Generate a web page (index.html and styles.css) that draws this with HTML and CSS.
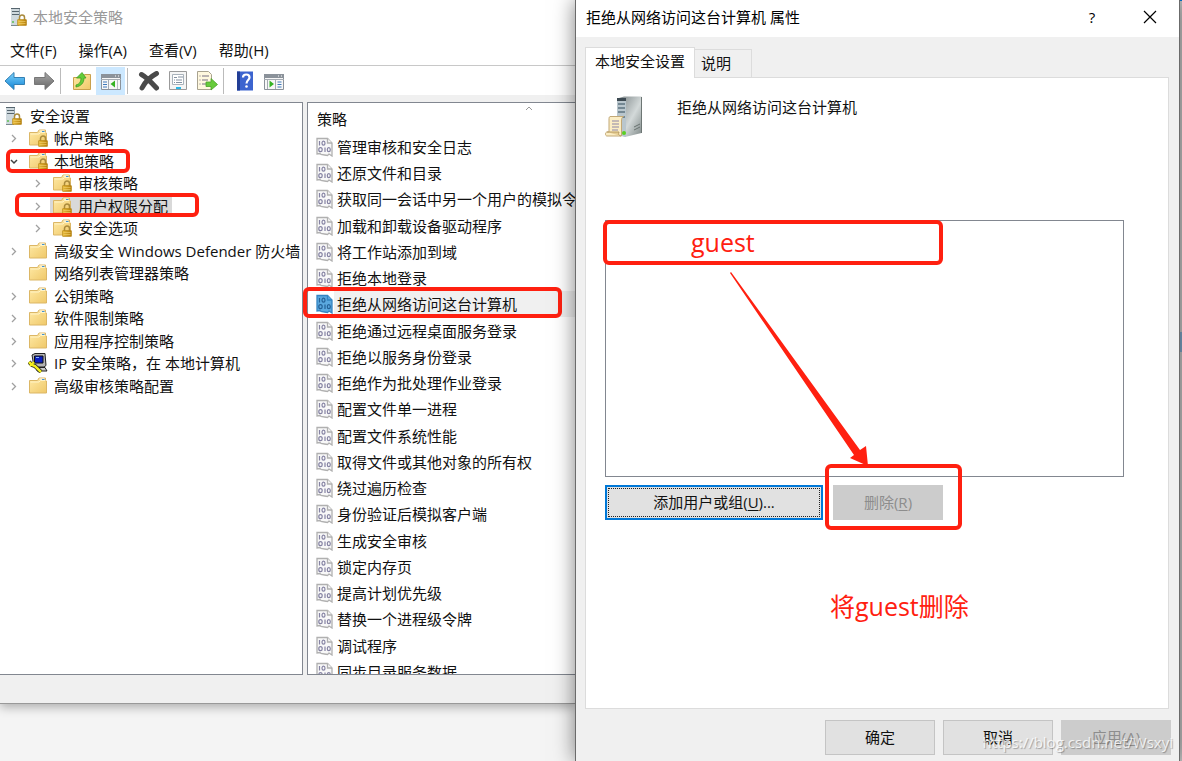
FILE: index.html
```html
<!DOCTYPE html>
<html lang="zh-CN">
<head>
    <meta charset="utf-8">
    <title>本地安全策略</title>
    <link rel="stylesheet" href="styles.css">
</head>
<body>
    <!-- Shared icons -->
    <svg class="defs" width="0" height="0" aria-hidden="true">
        <defs>
            <linearGradient id="gold" x1="0" y1="0" x2="1" y2="1">
                <stop offset="0" stop-color="#ffeaa6"/><stop offset="1" stop-color="#efc869"/>
            </linearGradient>
            <linearGradient id="lockg" x1="0" y1="0" x2="1" y2="0">
                <stop offset="0" stop-color="#e9bd3c"/><stop offset="1" stop-color="#b57f0c"/>
            </linearGradient>
            <linearGradient id="blue" x1="0" y1="0" x2="0" y2="1">
                <stop offset="0" stop-color="#7fd3fa"/><stop offset="1" stop-color="#0f83d6"/>
            </linearGradient>
            <linearGradient id="grey" x1="0" y1="0" x2="0" y2="1">
                <stop offset="0" stop-color="#a9a9a9"/><stop offset="1" stop-color="#656565"/>
            </linearGradient>
            <linearGradient id="steel" x1="0" y1="0" x2="1" y2="1">
                <stop offset="0" stop-color="#7d8688"/><stop offset=".55" stop-color="#d3d9d9"/><stop offset="1" stop-color="#7f8988"/>
            </linearGradient>
        </defs>
        <symbol id="lock" viewBox="0 0 10 12">
            <path d="M2.500 6V3.500a2.500 2.500 0 0 1 5 0V6" fill="none" stroke="#a98a3c" stroke-width="1.500"/>
            <rect x=".5" y="5.500" width="9" height="6" rx=".6" fill="url(#lockg)" stroke="#b5861a" stroke-width=".6"/>
            <path d="M1.500 7.500h7M1.500 9.500h7" stroke="#f3d374" stroke-width=".6"/>
        </symbol>
        <symbol id="folder" viewBox="0 0 20 20">
            <path d="M1.500 4.500h8l1.500-2.500h6.500v3h1v12h-17z" fill="url(#gold)" stroke="#dcb766"/>
            <path d="M11.500 3h5" stroke="#fff"/>
            <path d="M14 3.500h2.500" stroke="#3f93d6"/>
            <path d="M2.500 6h8.500l1.500-1.500h5" stroke="#fff3c7" fill="none"/>
        </symbol>
        <symbol id="folder-lock" viewBox="0 0 20 20">
            <use href="#folder" width="20" height="20"/>
            <use href="#lock" x="10" y="7" width="10" height="12"/>
        </symbol>
        <symbol id="server-lock" viewBox="0 0 20 20">
            <path d="M2 1h9v17H2z" fill="#94a3ab"/>
            <path d="M2 1h8v17H2z" fill="#cfd9de"/>
            <path d="M2 1.500h9M3 4.500h7M3 7.500h7" stroke="#56656e" stroke-width="1.200"/>
            <path d="M2 18.500h8" stroke="#7b898f"/>
            <circle cx="4" cy="15" r="1" fill="#5fbf52"/>
            <use href="#lock" x="8" y="7" width="10" height="12"/>
        </symbol>
        <symbol id="pc-key" viewBox="0 0 20 20">
            <path d="M4 2l3-1.500h10l1 12-2 1.500H6z" fill="#b4b4b4" stroke="#222"/>
            <path d="M6.500 3h8.500v7H6.500z" fill="#0a1fc0" stroke="#111"/>
            <path d="M8 4.500h3" stroke="#83b2ff"/>
            <path d="M9 14.500h8l2 3.500H9z" fill="#c9c9c9" stroke="#222"/>
            <path d="M1 9l3 3 3 1 6 6" fill="none" stroke="#222" stroke-width="4"/>
            <path d="M1 9l3 3 3 1 6 6" fill="none" stroke="#f3ef1d" stroke-width="2.500"/>
            <path d="M2 13l4-4" stroke="#f3ef1d" stroke-width="2"/>
        </symbol>
        <symbol id="chev" viewBox="0 0 20 20">
            <path d="M8 7l3.500 3.500L8 14" fill="none" stroke="#a0a0a0" stroke-width="1.300"/>
        </symbol>
        <symbol id="chev-open" viewBox="0 0 20 20">
            <path d="M7 9l3 3 3-3" fill="none" stroke="#404040" stroke-width="1.500"/>
        </symbol>
        <symbol id="policy" viewBox="0 0 17 20">
            <path class="sheet" d="M1 1.500h10.500l4.500 4.500V19l-3-2-1.500 1.500L8.500 18 5 17.500 4 16.500 1 17z" stroke-width="1.300"/>
            <path class="sheet" d="M11.500 1.500V6H16" stroke-width="1.300"/>
            <g class="bits" fill="none" stroke-width="1.200">
                <path d="M3.500 4v4.500M9 10.500V15"/>
                <ellipse cx="7.500" cy="6.200" rx="1.500" ry="2"/>
                <ellipse cx="4.500" cy="12.700" rx="1.700" ry="2"/>
                <ellipse cx="12.800" cy="12.700" rx="1.500" ry="2"/>
            </g>
        </symbol>
    </svg>

    <div class="desktop">
        <!-- Policy console -->
        <section class="console">
            <header class="console-title">
                <svg class="ico"><use href="#server-lock"/></svg>
                <span>本地安全策略</span>
            </header>
            <nav class="menu">
                <button>文件(F)</button>
                <button>操作(A)</button>
                <button>查看(V)</button>
                <button>帮助(H)</button>
            </nav>
            <div class="toolbar">
                <button aria-label="后退"><svg viewBox="0 0 22 20"><path d="M1 10l9-8.500v5h10.500v7H10v5z" fill="url(#blue)" stroke="#3380b4"/></svg></button>
                <button aria-label="前进"><svg viewBox="0 0 22 20"><path d="M21 10l-9-8.500v5H1.500v7H12v5z" fill="url(#grey)" stroke="#777"/></svg></button>
                <i class="sep"></i>
                <button aria-label="上一级"><svg viewBox="0 0 22 20"><path d="M2.500 6.500h9l2-3h6v15h-17z" fill="url(#gold)" stroke="#c9a04c"/><path d="M5 14c4-1 5-4 5-7H5.500l5.500-5.500L15 7h-2c0 5-3 8-8 9z" fill="#63cc38" stroke="#3c9c22" stroke-width=".8"/></svg></button>
                <button class="on" aria-label="显示控制台树"><svg viewBox="0 0 22 20"><path d="M1.500 3.500h19v15h-19z" fill="#f7f7f7" stroke="#8b929a"/><path d="M1 3h20v4H1z" fill="#8b929a"/><path d="M15 5h1M18 5h1" stroke="#fff"/><path d="M1 8.500h20M8.500 9v9" stroke="#a5abb2"/><path d="M3 11h4M3 13.500h4M3 16h4" stroke="#3e79bb"/><path d="M15 9.500v7L10.500 13z" fill="#35b322"/><path d="M17.500 9v9" stroke="#b9bec4"/></svg></button>
                <i class="sep"></i>
                <button aria-label="删除"><svg viewBox="0 0 22 20"><path d="M3.500 3.500C8 6 13 11 18.500 17M18.500 2.500C12 6 7 11 4 17" fill="none" stroke="#4a4a4a" stroke-width="5" stroke-linecap="round"/></svg></button>
                <button aria-label="属性"><svg viewBox="0 0 22 20"><path d="M2.500 .5h17v18h-17z" fill="#f5f5f5" stroke="#9a9a9a"/><path d="M5.500 3.500h11v10h-11z" fill="#fff" stroke="#a9b2bb"/><path d="M7 6.500h3M7 9h1M9 9h6M7 11.500h1M9 11.500h6M11 6h5" stroke="#8390a0"/><path d="M9 17h5" stroke="#29b7e6" stroke-width="2"/></svg></button>
                <button aria-label="导出列表"><svg viewBox="0 0 22 20"><path d="M1.500 .5h11l3 3v15h-14z" fill="#fff8df" stroke="#a9a390"/><path d="M3.500 5h1M6 5h7M3.500 9h1M6 9h6M3.500 13h1M6 13h5" stroke="#766e83"/><path d="M10 11h5V7.500l6.500 6L15 19v-3.500h-5z" fill="#67cb3b" stroke="#4ba12b" stroke-width=".8"/></svg></button>
                <i class="sep"></i>
                <button aria-label="帮助"><svg viewBox="0 0 22 20"><path d="M3 .5h16v19H3z" fill="#3c64cf"/><path d="M3 .5h3v19H3z" fill="#223e96"/><path d="M9 6.500c0-4 6.500-4 6.500 0 0 2.500-3 2.500-3 6" fill="none" stroke="#fff" stroke-width="2.200"/><circle cx="12.500" cy="15.500" r="1.300" fill="#fff"/></svg></button>
                <button aria-label="显示操作窗格"><svg viewBox="0 0 22 20"><path d="M1.500 3.500h19v15h-19z" fill="#f7f7f7" stroke="#8b929a"/><path d="M1 3h20v4H1z" fill="#8b929a"/><path d="M15 5h1M18 5h1" stroke="#fff"/><path d="M1 8.500h20M12.500 9v9M4.500 9v9" stroke="#a5abb2"/><path d="M14.500 11h4M14.500 13.500h4M14.500 16h4" stroke="#3e79bb"/><path d="M6.500 9.500v7L11 13z" fill="#35b322"/></svg></button>
            </div>

            <div class="panes">
                <ul class="tree">
                    <li class="root"><span class="node"><svg class="ico"><use href="#server-lock"/></svg>安全设置</span></li>
                    <li><svg class="ico"><use href="#chev"/></svg><span class="node"><svg class="ico"><use href="#folder-lock"/></svg>帐户策略</span></li>
                    <li><svg class="ico"><use href="#chev-open"/></svg><span class="node"><svg class="ico"><use href="#folder-lock"/></svg>本地策略</span></li>
                    <li class="sub"><svg class="ico"><use href="#chev"/></svg><span class="node"><svg class="ico"><use href="#folder-lock"/></svg>审核策略</span></li>
                    <li class="sub"><svg class="ico"><use href="#chev"/></svg><span class="node selected"><svg class="ico"><use href="#folder-lock"/></svg>用户权限分配</span></li>
                    <li class="sub"><svg class="ico"><use href="#chev"/></svg><span class="node"><svg class="ico"><use href="#folder-lock"/></svg>安全选项</span></li>
                    <li><svg class="ico"><use href="#chev"/></svg><span class="node"><svg class="ico"><use href="#folder"/></svg>高级安全 Windows Defender 防火墙</span></li>
                    <li><svg class="ico"></svg><span class="node"><svg class="ico"><use href="#folder"/></svg>网络列表管理器策略</span></li>
                    <li><svg class="ico"><use href="#chev"/></svg><span class="node"><svg class="ico"><use href="#folder"/></svg>公钥策略</span></li>
                    <li><svg class="ico"><use href="#chev"/></svg><span class="node"><svg class="ico"><use href="#folder"/></svg>软件限制策略</span></li>
                    <li><svg class="ico"><use href="#chev"/></svg><span class="node"><svg class="ico"><use href="#folder"/></svg>应用程序控制策略</span></li>
                    <li><svg class="ico"><use href="#chev"/></svg><span class="node"><svg class="ico"><use href="#pc-key"/></svg>IP 安全策略，在 本地计算机</span></li>
                    <li><svg class="ico"><use href="#chev"/></svg><span class="node"><svg class="ico"><use href="#folder"/></svg>高级审核策略配置</span></li>
                </ul>

                <div class="list">
                    <div class="list-head">
                        策略
                        <svg class="sort" viewBox="0 0 8 6"><path d="M1 5l3-3 3 3" fill="none" stroke="#999"/></svg>
                    </div>
                    <ul class="rows">
                        <li><svg><use href="#policy"/></svg><span>管理审核和安全日志</span></li>
                        <li><svg><use href="#policy"/></svg><span>还原文件和目录</span></li>
                        <li><svg><use href="#policy"/></svg><span>获取同一会话中另一个用户的模拟令牌</span></li>
                        <li><svg><use href="#policy"/></svg><span>加载和卸载设备驱动程序</span></li>
                        <li><svg><use href="#policy"/></svg><span>将工作站添加到域</span></li>
                        <li><svg><use href="#policy"/></svg><span>拒绝本地登录</span></li>
                        <li class="selected"><svg><use href="#policy"/></svg><span>拒绝从网络访问这台计算机</span></li>
                        <li><svg><use href="#policy"/></svg><span>拒绝通过远程桌面服务登录</span></li>
                        <li><svg><use href="#policy"/></svg><span>拒绝以服务身份登录</span></li>
                        <li><svg><use href="#policy"/></svg><span>拒绝作为批处理作业登录</span></li>
                        <li><svg><use href="#policy"/></svg><span>配置文件单一进程</span></li>
                        <li><svg><use href="#policy"/></svg><span>配置文件系统性能</span></li>
                        <li><svg><use href="#policy"/></svg><span>取得文件或其他对象的所有权</span></li>
                        <li><svg><use href="#policy"/></svg><span>绕过遍历检查</span></li>
                        <li><svg><use href="#policy"/></svg><span>身份验证后模拟客户端</span></li>
                        <li><svg><use href="#policy"/></svg><span>生成安全审核</span></li>
                        <li><svg><use href="#policy"/></svg><span>锁定内存页</span></li>
                        <li><svg><use href="#policy"/></svg><span>提高计划优先级</span></li>
                        <li><svg><use href="#policy"/></svg><span>替换一个进程级令牌</span></li>
                        <li><svg><use href="#policy"/></svg><span>调试程序</span></li>
                        <li><svg><use href="#policy"/></svg><span>同步目录服务数据</span></li>
                    </ul>
                </div>
            </div>

            <i class="mark mark-local"></i>
            <i class="mark mark-rights"></i>
            <i class="mark mark-policy"></i>
        </section>

        <!-- Properties dialog -->
        <section class="dialog">
            <header class="dialog-title">
                <span>拒绝从网络访问这台计算机 属性</span>
                <button aria-label="帮助">?</button>
                <button aria-label="关闭"><svg width="14" height="14" viewBox="0 0 14 14"><path d="M1 1l12 12M13 1L1 13" stroke="#000" stroke-width="1.200"/></svg></button>
            </header>

            <div class="tabs">
                <button class="tab active">本地安全设置</button>
                <button class="tab">说明</button>
            </div>

            <div class="page">
                <div class="policy-head">
                    <svg viewBox="0 0 38 42">
                        <path d="M14 2l5-1.500h17.500V37L20 41l-6-2z" fill="url(#steel)"/>
                        <path d="M12 2h9v39l-9-2z" fill="#b9c6cd"/>
                        <path d="M12 2h9v3h-9z" fill="#3e4b53"/>
                        <path d="M13 8h7M13 12h7M13 16h7M13 21h7" stroke="#5e7480" stroke-width="1.500"/>
                        <path d="M29 31l6-3M29 34l6-3" stroke="#687270"/>
                        <path d="M36.500 1v36" stroke="#6d7674"/>
                        <circle cx="19" cy="37" r="2" fill="#5bd020"/>
                        <path d="M5 20.500h13.500c-2 1-2 3-2 4.500v15H2c-2 0-2-4 0-4h2V24c0-2 0-3 1-3.500z" fill="#fbedc4" stroke="#c2a876"/>
                        <path d="M2 36h12c-1 2 0 4 2 4" fill="#e6cd93" stroke="#b89b63"/>
                        <path d="M7 25h7M7 28h7M7 31h7M7 34h6" stroke="#8d86a6"/>
                    </svg>
                    <span>拒绝从网络访问这台计算机</span>
                </div>
                <select class="users" size="10" aria-label="用户或组"></select>
                <div class="actions">
                    <button class="btn btn-add">添加用户或组(<u>U</u>)...</button>
                    <button class="btn" disabled>删除(<u>R</u>)</button>
                </div>
            </div>

            <footer class="buttons">
                <button class="btn">确定</button>
                <button class="btn">取消</button>
                <button class="btn" disabled>应用(<u>A</u>)</button>
            </footer>

            <i class="mark mark-user"></i>
            <i class="mark mark-remove"></i>
            <svg class="arrow" viewBox="0 0 140 196"><path d="M2 1L131 179l6-4 2 20-18-8 4-3L1 2z" fill="#ff2010"/></svg>
            <span class="note note-guest">guest</span>
            <span class="note note-remove">将guest删除</span>
            <span class="watermark">https://blog.csdn.net/Wsxyi</span>
        </section>

        <div class="behind"></div>
    </div>
</body>
</html>
```

FILE: styles.css
```css
* { box-sizing: border-box; }
body { margin: 0; background: #f4f4f4; color: #111; font: 15px/22px "Open Sans", "Noto Sans CJK SC", sans-serif; }
ul { list-style: none; margin: 0; padding: 0; }
button { margin: 0; padding: 0; border: none; background: none; color: inherit; font: inherit; }
.defs { position: absolute; }
.ico { width: 20px; height: 20px; flex: none; }

.desktop { display: grid; grid-template-columns: 575fr 605fr 2px; height: 100vh; overflow: hidden; }

/* console window */
.console { position: relative; display: flex; flex-direction: column; min-width: 0; height: calc(100vh - 57px); background: #f0f0f0; border-bottom: 1px solid #999; box-shadow: 0 3px 10px rgba(0,0,0,.3); }
.console-title { display: flex; align-items: center; gap: 4px; height: 34px; padding-left: 9px; background: #fff; color: #999; }
.menu { display: flex; gap: 22px; height: 31px; padding: 5px 10px 4px; background: #fff; }
.toolbar { display: flex; align-items: center; height: 30px; background: #fff; border-top: 1px solid #c8c8c8; }
.toolbar button { display: flex; align-items: center; justify-content: center; width: 29px; height: 28px; }
.toolbar button.on { background: #cce8ff; }
.toolbar svg { width: 22px; height: 20px; }
.sep { width: 1px; height: 26px; margin: 0 6px 0 2px; background: #bbb; }

.panes { display: flex; flex: 1; gap: 4px; min-height: 0; padding: 7px 0 28px; }
.tree, .list { border: 1px solid #828790; background: #fff; overflow: hidden; white-space: nowrap; }
.tree { width: 303px; flex: none; border-left: none; padding-top: 1px; }
.tree li { display: flex; align-items: center; gap: 2px; height: 23px; padding-left: 4px; }
.tree li:nth-child(even) { height: 22px; }
.tree .root { padding-left: 2px; }
.tree .sub { padding-left: 28px; }
.node { display: flex; align-items: center; gap: 6px; height: 22px; padding: 0 4px 0 2px; }
.node.selected { background: #d9d9d9; }

.list { flex: 1; border-right: none; }
.list-head { position: relative; height: 31px; padding: 5px 9px; }
.sort { position: absolute; top: 2px; right: 42px; width: 8px; height: 6px; }
.rows li { display: flex; align-items: center; height: 26px; padding-left: 8px; }
.rows li:nth-child(4n) { height: 27px; }
.rows svg { width: 17px; height: 20px; margin-right: 1px; flex: none; }
.rows span { flex: 1; padding-left: 3px; line-height: 26px; }
.rows .selected span { background: #f0f0f0; }
.rows { --sheet: #f8f8f8; --edge: #b0b0b0; --bits: #8583a3; }
.rows .selected { --sheet: #5ba9df; --edge: #3585c2; --bits: #246196; }
.sheet { fill: var(--sheet); stroke: var(--edge); }
.bits { stroke: var(--bits); }

/* properties dialog */
.dialog { position: relative; display: flex; flex-direction: column; min-width: 0; background: #f0f0f0; border: solid #6b6b6b; border-width: 0 1px; box-shadow: 0 0 20px rgba(0,0,0,.5); }
.dialog-title { display: flex; align-items: center; height: 37px; padding: 0 0 3px 10px; background: #fff; color: #000; }
.dialog-title span { flex: 1; }
.dialog-title button { display: flex; align-items: center; justify-content: center; width: 58px; height: 34px; }
.tabs { display: flex; align-items: flex-end; height: 40px; padding-left: 9px; }
.tab { height: 28px; padding: 0 20px 2px 6px; border: 1px solid #dcdcdc; border-width: 1px 1px 0 0; }
.tab.active { position: relative; z-index: 1; height: 31px; margin-bottom: -1px; padding: 0 9px 4px; border-left-width: 1px; background: #fff; }
.page { flex: 1; margin: 0 10px 0 9px; padding: 18px 44px 0 19px; border: 1px solid #dcdcdc; background: #fff; }
.policy-head { display: flex; gap: 34px; height: 42px; margin-bottom: 82px; }
.policy-head svg { width: 38px; height: 42px; }
.users { display: block; width: 100%; height: 257px; border: 1px solid #828790; border-radius: 0; background: #fff; }
.actions { display: flex; gap: 10px; margin-top: 8px; }
.btn { width: 110px; height: 35px; padding-bottom: 2px; border: 1px solid #c4c4c4; background: #e1e1e1; }
.btn:disabled { border-color: #ccc; background: #ccc; color: #8d8d8d; }
.btn u { text-underline-offset: 2px; }
.btn-add { width: 218px; border: 2px solid #0078d7; outline: 1px dotted #222; outline-offset: -4px; }
.buttons { display: flex; justify-content: flex-end; gap: 8px; padding: 11px 8px 6px; }

/* red annotations */
.mark { position: absolute; border: 4px solid #ff2010; border-radius: 6px; }
.mark-local { left: 6px; top: 149px; width: 124px; height: 24px; }
.mark-rights { left: 15px; top: 193px; width: 184px; height: 24px; }
.mark-policy { left: 303px; top: 287px; width: 259px; height: 31px; }
.mark-user { left: 27px; top: 220px; width: 340px; height: 45px; }
.mark-remove { left: 249px; top: 464px; width: 137px; height: 66px; }
.arrow { position: absolute; left: 153px; top: 271px; width: 140px; height: 196px; }
.note { position: absolute; color: #ff2010; font-size: 25px; line-height: 36px; }
.note-guest { left: 115px; top: 224px; }
.note-remove { left: 254px; top: 588px; }
.watermark { position: absolute; right: 6px; bottom: 8px; color: rgba(255,255,255,.8); font-size: 15px; text-shadow: 1px 1px 1px rgba(0,0,0,.3); }

/* sliver of the window behind */
.behind { background: linear-gradient(#0078d7 1px, transparent 1px), linear-gradient(transparent 332px, #7fa6c8 332px, #7fa6c8 352px, transparent 352px), #c6c6c6; }
```
